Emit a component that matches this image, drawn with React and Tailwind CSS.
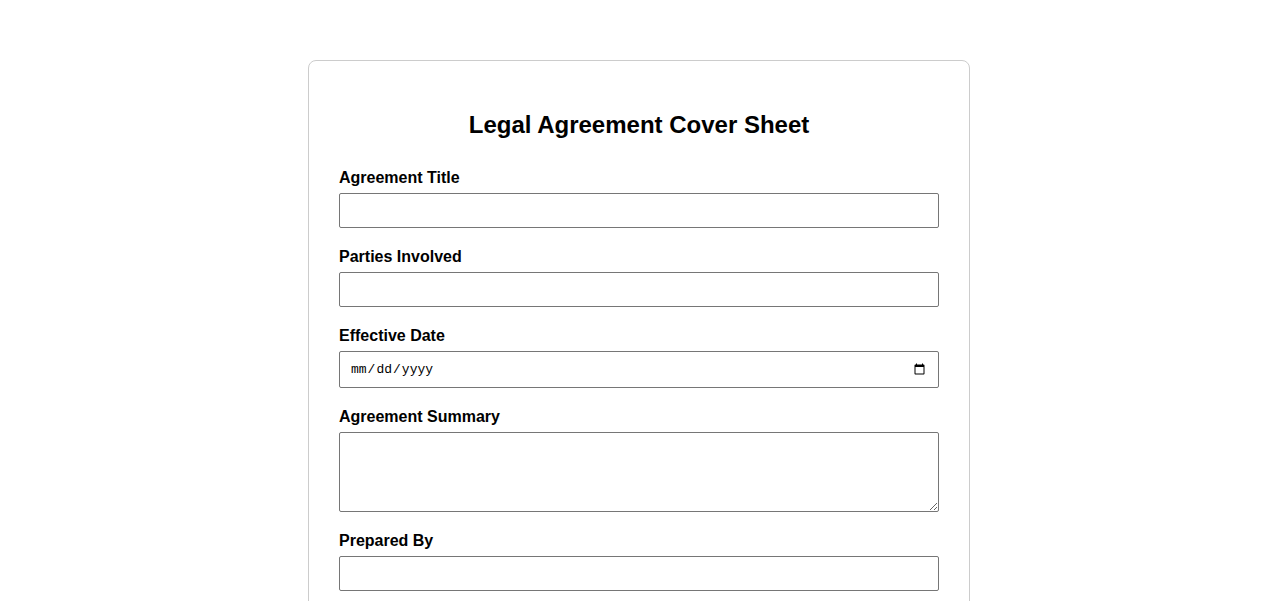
import React, { useState } from "react";

const fields = [
  { id: "title", label: "Agreement Title", type: "text" },
  { id: "parties", label: "Parties Involved", type: "text" },
  { id: "date", label: "Effective Date", type: "date" },
  { id: "summary", label: "Agreement Summary", type: "textarea" },
  { id: "preparedBy", label: "Prepared By", type: "text" },
];

const App = () => {
  const [values, setValues] = useState({});

  const update = (id) => (e) => setValues({ ...values, [id]: e.target.value });

  return (
    <div className="min-h-screen bg-white pt-[60px] pb-10 font-['Liberation_Sans',Arial,sans-serif] text-black">
      <div className="mx-auto w-[662px] rounded-[8px] border border-[#cccccc] bg-white px-[30px] pt-[46px] pb-[30px]">
        <h2 className="mb-[23px] text-center text-[24px] font-bold leading-[36px]">
          Legal Agreement Cover Sheet
        </h2>

        {fields.map((field) => (
          <div key={field.id} className="mb-[17px]">
            <label htmlFor={field.id} className="mb-[3px] block text-[16px] font-bold leading-[24px]">
              {field.label}
            </label>
            {field.type === "textarea" ? (
              <textarea
                id={field.id}
                value={values[field.id] || ""}
                onChange={update(field.id)}
                className="block h-[80px] w-full rounded-[2px] border border-[#767676] px-2 py-1 text-[14px]"
              />
            ) : field.type === "date" ? (
              <input
                id={field.id}
                type="date"
                value={values[field.id] || ""}
                onChange={update(field.id)}
                className="block h-[37px] w-full rounded-[2px] border border-[#767676] px-[10px] font-['Liberation_Mono',monospace] text-[13px]"
              />
            ) : (
              <input
                id={field.id}
                type="text"
                value={values[field.id] || ""}
                onChange={update(field.id)}
                className="block h-[35px] w-full rounded-[2px] border border-[#767676] px-2 text-[14px]"
              />
            )}
          </div>
        ))}
      </div>
    </div>
  );
};

export default App;
